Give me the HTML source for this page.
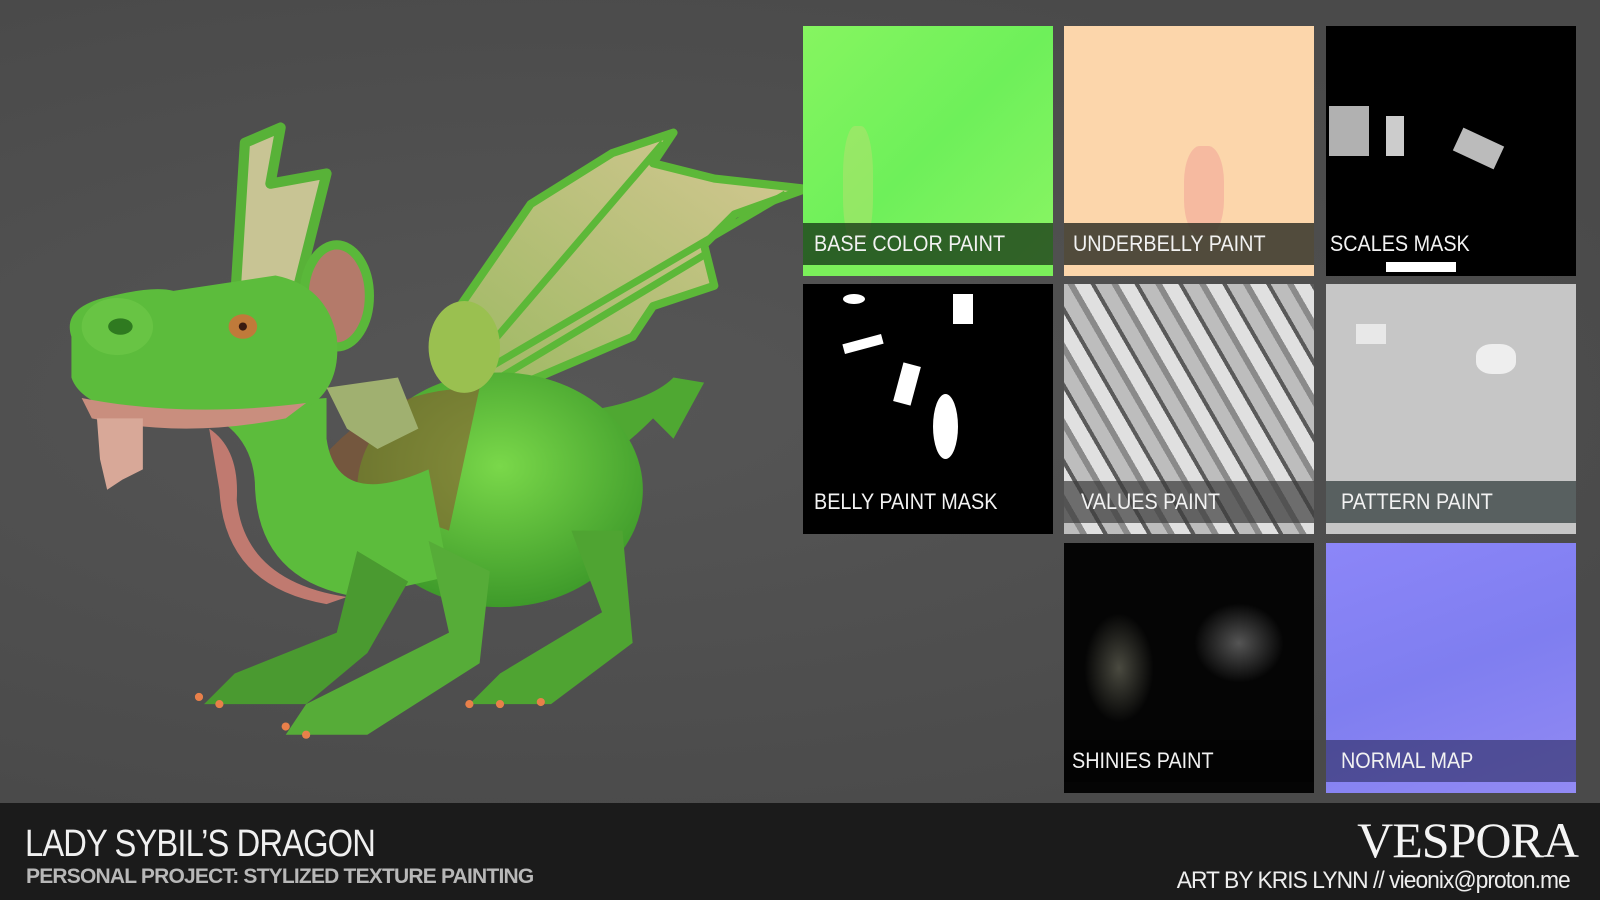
<!DOCTYPE html>
<html><head><meta charset="utf-8"><style>
*{margin:0;padding:0;box-sizing:border-box}
body{width:1600px;height:900px;overflow:hidden;background:#4f4f4f;font-family:"Liberation Sans",sans-serif;position:relative}
.bg{position:absolute;left:0;top:0;width:1600px;height:803px;background:radial-gradient(ellipse at 35% 50%,#565656,#4a4a4a 80%)}
.tile{position:absolute;width:250px;height:250px;overflow:hidden}
.lab{position:absolute;left:0;top:197px;width:250px;height:42px;background:rgba(20,20,20,.62);color:#f2f2f2;font-size:22px;line-height:42px;padding-left:11px;white-space:nowrap}
.lab span{display:inline-block;transform:scaleX(.9);transform-origin:left center}
.foot{position:absolute;left:0;top:803px;width:1600px;height:97px;background:#1b1b1b}
</style></head><body>
<div class="bg"></div>
<svg style="position:absolute;left:0;top:0" width="1600" height="900" viewBox="0 0 1568 882">
<defs>
<radialGradient id="g1" cx="50%" cy="40%" r="60%"><stop offset="0" stop-color="#7ad84a"/><stop offset="1" stop-color="#3e9a2a"/></radialGradient>
<linearGradient id="w" x1="0" y1="1" x2="1" y2="0"><stop offset="0" stop-color="#9ab860"/><stop offset="1" stop-color="#d6c894"/></linearGradient>
</defs>
<path d="M430,330 L520,200 L600,150 L660,130 L640,160 L700,175 L790,185 L720,210 L690,240 L700,280 L640,300 L620,330 L480,390 Z" fill="url(#w)" stroke="#5cb838" stroke-width="8" stroke-linejoin="round"/>
<path d="M470,350 L650,140 M480,360 L770,190 M490,370 L690,250" stroke="#5cb838" stroke-width="7" fill="none"/>
<path d="M590,400 Q640,390 660,370 L690,375 L660,430 L640,410 Q610,440 590,450 Z" fill="#4fa832"/>
<ellipse cx="490" cy="480" rx="140" ry="115" fill="url(#g1)"/>
<path d="M300,470 Q360,380 470,380 L440,520 Z" fill="#8a5a30" opacity=".6"/>
<path d="M190,400 Q250,420 250,480 Q255,570 350,585 L440,565 L420,460 Q330,500 320,430 L320,390 Z" fill="#5cbc3c"/>
<path d="M205,420 Q235,440 232,490 Q240,570 340,585 L320,592 Q220,575 215,480 Z" fill="#c07a70"/>
<path d="M350,540 L330,620 L230,660 L200,690 L300,690 L360,640 L400,570 Z" fill="#4a9a30"/>
<path d="M420,530 L440,620 L300,690 L280,720 L360,720 L470,650 L480,560 Z" fill="#56ac38"/>
<path d="M560,520 L590,600 L490,660 L460,690 L540,690 L620,630 L610,520 Z" fill="#4fa432"/>
<path d="M230,300 L240,140 L275,125 L265,180 L320,170 L290,290 Z" fill="#c8c494" stroke="#58b238" stroke-width="10" stroke-linejoin="round"/>
<ellipse cx="330" cy="290" rx="32" ry="50" fill="#b47a6a" stroke="#5ab83a" stroke-width="9"/>
<path d="M70,330 Q60,300 110,290 Q150,280 170,285 L270,270 Q320,280 330,330 Q335,380 300,400 Q220,420 150,410 Q80,400 70,370 Z" fill="#5cbc3c"/>
<path d="M80,390 Q180,410 300,395 L280,410 Q180,430 90,410 Z" fill="#c98e7e"/>
<ellipse cx="115" cy="320" rx="35" ry="28" fill="#68c444"/>
<ellipse cx="118" cy="320" rx="12" ry="8" fill="#2f7a20"/>
<ellipse cx="238" cy="320" rx="14" ry="12" fill="#c07a3a"/>
<circle cx="238" cy="320" r="4" fill="#3a1a10"/>
<path d="M95,410 L140,410 L140,460 L120,470 L105,480 L98,450 Z" fill="#d8a898"/>
<ellipse cx="455" cy="340" rx="35" ry="45" fill="#9ac050"/>
<path d="M320,380 L390,370 L410,420 L370,440 L340,420 Z" fill="#a0b070"/>
<g fill="#e8804a"><circle cx="195" cy="683" r="4"/><circle cx="215" cy="690" r="4"/><circle cx="280" cy="712" r="4"/><circle cx="300" cy="720" r="4"/><circle cx="460" cy="690" r="4"/><circle cx="490" cy="690" r="4"/><circle cx="530" cy="688" r="4"/></g>
</svg>

<div class="tile" style="left:803px;top:26px;background:linear-gradient(135deg,#86f560,#6ef05a 50%,#8cf564)"><div style="position:absolute;left:40px;top:100px;width:30px;height:120px;background:#b8e070;opacity:.5;border-radius:40%"></div><div class="lab" style="background:rgba(20,50,20,.75)"><span>BASE COLOR PAINT</span></div><div style="position:absolute;top:239px;left:0;width:250px;height:11px;background:#7bf05a"></div></div>
<div class="tile" style="left:1064px;top:26px;background:#fcd6ab"><div style="position:absolute;left:120px;top:120px;width:40px;height:90px;background:#f2a69a;opacity:.6;border-radius:40%"></div><div class="lab" style="background:rgba(50,50,40,.85);padding-left:9px"><span>UNDERBELLY PAINT</span></div><div style="position:absolute;top:239px;left:0;width:250px;height:11px;background:#fcd6ab"></div></div>
<div class="tile" style="left:1326px;top:26px;background:#000"><div style="position:absolute;left:3px;top:80px;width:40px;height:50px;background:#ddd;opacity:.8"></div><div style="position:absolute;left:60px;top:90px;width:18px;height:40px;background:#ccc"></div><div style="position:absolute;left:130px;top:110px;width:45px;height:25px;background:#bbb;transform:rotate(25deg)"></div><div class="lab" style="background:rgba(0,0,0,.2);padding-left:4px"><span>SCALES MASK</span></div><div style="position:absolute;top:236px;left:60px;width:70px;height:10px;background:#fff"></div></div>
<div class="tile" style="left:803px;top:284px;background:#000"><div style="position:absolute;left:40px;top:10px;width:22px;height:10px;background:#fff;border-radius:50%"></div><div style="position:absolute;left:150px;top:10px;width:20px;height:30px;background:#fff"></div><div style="position:absolute;left:40px;top:55px;width:40px;height:10px;background:#fff;transform:rotate(-15deg)"></div><div style="position:absolute;left:95px;top:80px;width:18px;height:40px;background:#fff;transform:rotate(15deg)"></div><div style="position:absolute;left:130px;top:110px;width:25px;height:65px;background:#fff;border-radius:50%"></div><div class="lab" style="background:rgba(0,0,0,.5)"><span>BELLY PAINT MASK</span></div></div>
<div class="tile" style="left:1064px;top:284px;background:repeating-linear-gradient(60deg,#bdbdbd 0 14px,#8a8a8a 14px 20px,#e0e0e0 20px 34px,#5a5a5a 34px 38px)"><div class="lab" style="background:rgba(60,60,60,.7);padding-left:17px"><span>VALUES PAINT</span></div></div>
<div class="tile" style="left:1326px;top:284px;background:#c6c6c6"><div style="position:absolute;left:30px;top:40px;width:30px;height:20px;background:#e8e8e8"></div><div style="position:absolute;left:150px;top:60px;width:40px;height:30px;background:#eee;border-radius:40%"></div><div class="lab" style="background:rgba(60,70,70,.8);padding-left:15px"><span>PATTERN PAINT</span></div></div>
<div class="tile" style="left:1064px;top:543px;background:#050505"><div style="position:absolute;left:20px;top:70px;width:70px;height:110px;background:radial-gradient(#4a4a40,transparent 70%)"></div><div style="position:absolute;left:130px;top:60px;width:90px;height:80px;background:radial-gradient(#555,transparent 70%)"></div><div class="lab" style="background:rgba(0,0,0,.4);padding-left:8px"><span>SHINIES PAINT</span></div></div>
<div class="tile" style="left:1326px;top:543px;background:linear-gradient(160deg,#8c86f8,#7f7ef0 50%,#928af4)"><div class="lab" style="background:rgba(40,40,90,.6);padding-left:15px"><span>NORMAL MAP</span></div></div>

<div class="foot">
<div style="position:absolute;left:25px;top:20px;color:#f0f0f0;font-size:38px;letter-spacing:-1px;transform:scaleX(.86);transform-origin:left top;white-space:nowrap">LADY SYBIL’S DRAGON</div>
<div style="position:absolute;left:26px;top:62px;color:#b8b8b8;font-size:21px;font-weight:bold;letter-spacing:-0.8px;white-space:nowrap">PERSONAL PROJECT: STYLIZED TEXTURE PAINTING</div>
<div style="position:absolute;right:22px;top:8px;color:#f4f4f4;font-family:'Liberation Serif',serif;font-size:50px;letter-spacing:-1px">VESPORA</div>
<div style="position:absolute;right:30px;top:64px;color:#eeeeee;font-size:24px;letter-spacing:-1px;transform:scaleX(.95);transform-origin:right top;white-space:nowrap">ART BY KRIS LYNN // vieonix@proton.me</div>
</div>
</body></html>
